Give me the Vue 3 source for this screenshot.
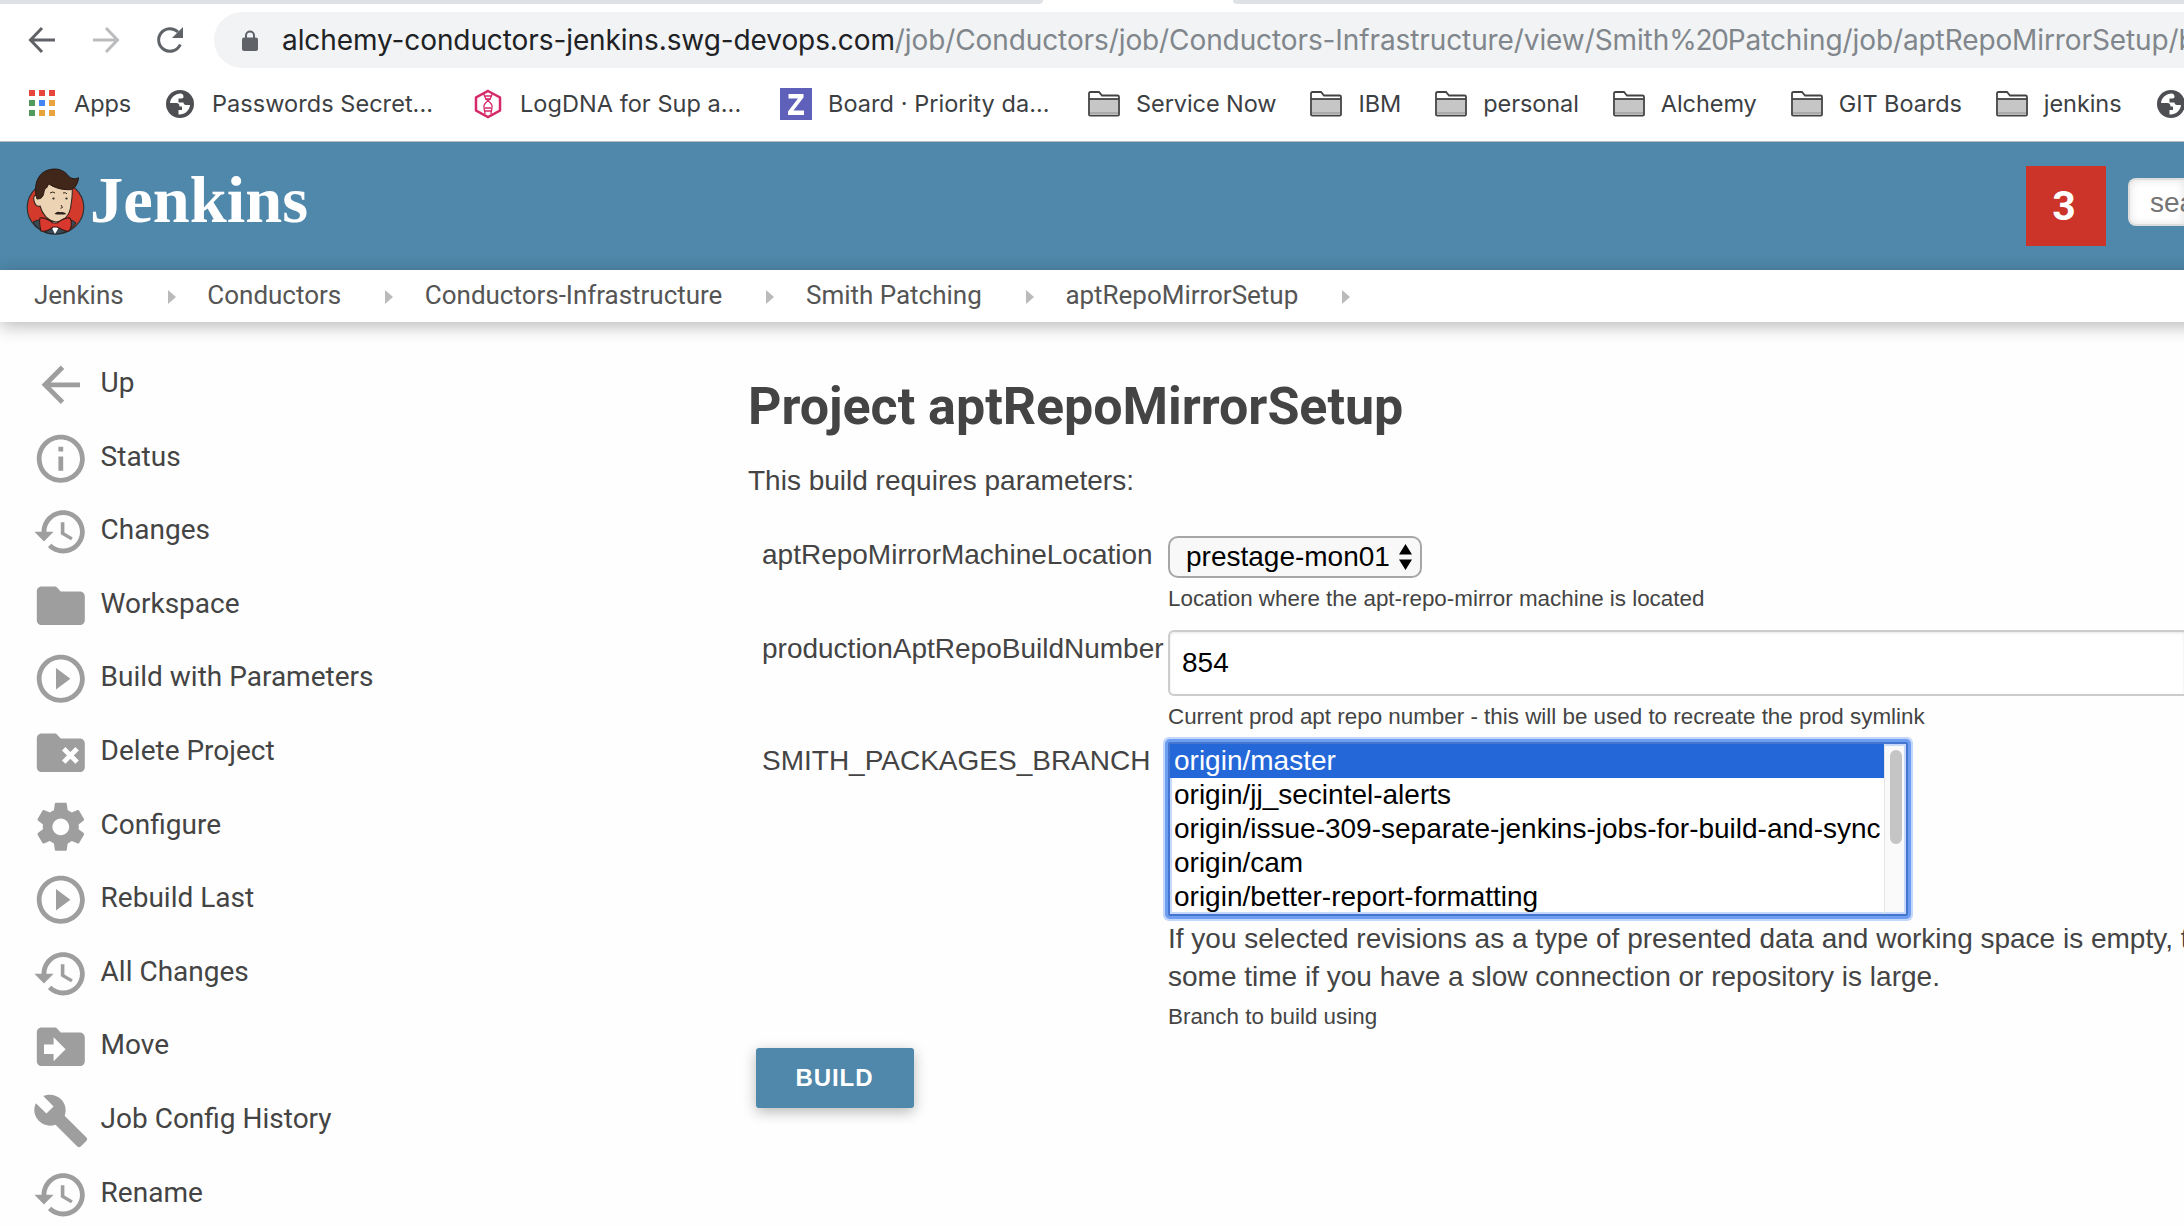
<script setup>
const bookmarks = [
  { icon: 'apps', label: 'Apps' },
  { icon: 'globe', label: 'Passwords Secret...', wide: true },
  { icon: 'dna', label: 'LogDNA for Sup a...', wide: true },
  { icon: 'zen', label: 'Board · Priority da...', wide: true },
  { icon: 'folder', label: 'Service Now' },
  { icon: 'folder', label: 'IBM' },
  { icon: 'folder', label: 'personal' },
  { icon: 'folder', label: 'Alchemy' },
  { icon: 'folder', label: 'GIT Boards' },
  { icon: 'folder', label: 'jenkins' },
  { icon: 'globe', label: '' }
]
const appDots = ['#e8453c', '#e8453c', '#e8453c', '#4f9a5c', '#4285f4', '#e8a33d', '#4f9a5c', '#e8a33d', '#e8a33d']
const crumbs = ['Jenkins', 'Conductors', 'Conductors-Infrastructure', 'Smith Patching', 'aptRepoMirrorSetup']

const paths = {
  back: 'M20 11H7.83l5.59-5.59L12 4l-8 8 8 8 1.41-1.41L7.83 13H20v-2z',
  info: 'M11 17h2v-6h-2v6zm1-15C6.48 2 2 6.48 2 12s4.48 10 10 10 10-4.48 10-10S17.52 2 12 2zm0 18c-4.41 0-8-3.59-8-8s3.59-8 8-8 8 3.59 8 8-3.59 8-8 8zM11 9h2V7h-2v2z',
  history: 'M13 3c-4.97 0-9 4.03-9 9H1l3.89 3.89.07.14L9 12H6c0-3.87 3.13-7 7-7s7 3.13 7 7-3.13 7-7 7c-1.93 0-3.68-.79-4.94-2.06l-1.42 1.42C8.27 19.99 10.51 21 13 21c4.97 0 9-4.03 9-9s-4.03-9-9-9zm-1 5v5l4.28 2.54.72-1.21-3.5-2.08V8H12z',
  folder: 'M10 4H4c-1.1 0-1.99.9-1.99 2L2 18c0 1.1.9 2 2 2h16c1.1 0 2-.9 2-2V8c0-1.1-.9-2-2-2h-8l-2-2z',
  play: 'M10 16.5l6-4.5-6-4.5v9zM12 2C6.48 2 2 6.48 2 12s4.48 10 10 10 10-4.48 10-10S17.52 2 12 2zm0 18c-4.41 0-8-3.59-8-8s3.59-8 8-8 8 3.59 8 8-3.59 8-8 8z',
  gear: 'M19.43 12.98c.04-.32.07-.64.07-.98s-.03-.66-.07-.98l2.11-1.65c.19-.15.24-.42.12-.64l-2-3.46c-.12-.22-.39-.3-.61-.22l-2.49 1c-.52-.4-1.08-.73-1.69-.98l-.38-2.65C14.46 2.18 14.25 2 14 2h-4c-.25 0-.46.18-.49.42l-.38 2.65c-.61.25-1.17.59-1.69.98l-2.49-1c-.23-.09-.49 0-.61.22l-2 3.46c-.13.22-.07.49.12.64l2.11 1.65c-.04.32-.07.65-.07.98s.03.66.07.98l-2.11 1.65c-.19.15-.24.42-.12.64l2 3.46c.12.22.39.3.61.22l2.49-1c.52.4 1.08.73 1.69.98l.38 2.65c.03.24.24.42.49.42h4c.25 0 .46-.18.49-.42l.38-2.65c.61-.25 1.17-.59 1.69-.98l2.49 1c.23.09.49 0 .61-.22l2-3.46c.12-.22.07-.49-.12-.64l-2.11-1.65zM12 15.5c-1.93 0-3.5-1.57-3.5-3.5s1.57-3.5 3.5-3.5 3.5 1.57 3.5 3.5-1.57 3.5-3.5 3.5z',
  wrench: 'M22.7 19l-9.1-9.1c.9-2.3.4-5-1.5-6.9-2-2-5-2.4-7.4-1.3L9 6 6 9 1.6 4.7C.4 7.1.9 10.1 2.9 12.1c1.9 1.9 4.6 2.4 6.9 1.5l9.1 9.1c.4.4 1 .4 1.4 0l2.3-2.3c.5-.4.5-1.1.1-1.4z'
}
const tasks = [
  { icon: 'back', label: 'Up' },
  { icon: 'info', label: 'Status' },
  { icon: 'history', label: 'Changes' },
  { icon: 'folder', label: 'Workspace' },
  { icon: 'play', label: 'Build with Parameters' },
  { icon: 'folder', mark: 'delete', label: 'Delete Project' },
  { icon: 'gear', label: 'Configure' },
  { icon: 'play', label: 'Rebuild Last' },
  { icon: 'history', label: 'All Changes' },
  { icon: 'folder', mark: 'move', label: 'Move' },
  { icon: 'wrench', label: 'Job Config History' },
  { icon: 'history', label: 'Rename' }
]
const branches = [
  'origin/master',
  'origin/jj_secintel-alerts',
  'origin/issue-309-separate-jenkins-jobs-for-build-and-sync',
  'origin/cam',
  'origin/better-report-formatting'
]
</script>

<template>
  <div class="page">
    <div class="tabs"><i class="tab-left"></i><i class="tab-right"></i></div>
    <div class="toolbar">
      <svg class="nav" viewBox="0 0 32 32"><path d="M29 16H5M16 4 4.500 16 16 28" fill="none" stroke="#5f6368" stroke-width="3" /></svg>
      <svg class="nav" viewBox="0 0 32 32"><path d="M3 16h24M16 4l11.500 12L16 28" fill="none" stroke="#babcbe" stroke-width="3" /></svg>
      <svg class="nav" viewBox="0 0 32 32"><path d="M26.300 20.500A11.300 11.300 0 1 1 24 8" fill="none" stroke="#5f6368" stroke-width="3" /><path d="M29 3v11H18z" fill="#5f6368" /></svg>
      <div class="omnibox">
        <svg class="lock" viewBox="0 0 16 21"><path d="M4 9V5.500a4 4 0 0 1 8 0V9" fill="none" stroke="#5f6368" stroke-width="2" /><rect y="7.500" width="16" height="13.500" rx="2" fill="#5f6368" /></svg>
        <span class="host">alchemy-conductors-jenkins.swg-devops.com</span><span class="path">/job/Conductors/job/Conductors-Infrastructure/view/Smith<span class="escape">%20</span>Patching/job/aptRepoMirrorSetup/b</span>
      </div>
    </div>
    <div class="bookmarks">
      <div v-for="(b, i) in bookmarks" :key="i" class="bookmark">
        <svg v-if="b.icon === 'apps'" class="bm-icon" viewBox="0 0 32 32">
          <rect v-for="(c, n) in appDots" :key="n" :x="3 + (n % 3) * 10" :y="2 + Math.floor(n / 3) * 10" width="6" height="6" :fill="c" />
        </svg>
        <svg v-else-if="b.icon === 'globe'" class="bm-icon" viewBox="0 0 32 32">
          <circle cx="16" cy="16" r="14" fill="#4d4f53" />
          <path d="M17 5.500c-6 .3-10.500 4.200-11 9.500h6.500c2 0 3 1.500 3 3.500h2.500v3.500h-3.500v4.500c6 .5 11-4 11.500-9.500h-4c-1.500 0-2.500-1-2.500-2.500h-5v-4h3c1.500 0 2-1 2-2 0-1.500-.8-2.500-2.500-3z" fill="#fff" />
        </svg>
        <svg v-else-if="b.icon === 'dna'" class="bm-icon" viewBox="0 0 32 32">
          <path d="M16 3 28 9.500v13L16 29 4 22.500v-13z" fill="none" stroke="#d5296a" stroke-width="2.500" />
          <path d="M12 6c0 6 8 8 8 12s-1 6-1 8M20 6c0 6-8 8-8 12s1 6 1 8M12.500 8h7M13 11h6M13 20h6M12.500 23h7" fill="none" stroke="#d5296a" stroke-width="1.300" />
        </svg>
        <svg v-else-if="b.icon === 'zen'" class="bm-icon" viewBox="0 0 32 32">
          <rect width="32" height="32" fill="#5e60ba" />
          <path d="M8.500 6h15v3.500L13.500 22.500h10.500V27H8v-3.500L18 10.500H8.500z" fill="#fff" />
        </svg>
        <svg v-else class="bm-icon" viewBox="0 0 32 32">
          <path d="M1 26.500v-21q0-1.500 1.500-1.500h8.500l3 3.500h15.500q1.500 0 1.500 1.500v17.500q0 1.200-1.200 1.200H2.200Q1 27.700 1 26.500z" fill="#fff" stroke="#434343" stroke-width="1.800" />
          <path d="M2 11h28v13H2z" fill="#c6c6c6" /><path d="M2 24h28v2.500H2z" fill="#aaa" /><path d="M1 11h30" stroke="#434343" stroke-width="1.800" />
        </svg>
        <span class="bm-label" :class="{ wide: b.wide }">{{ b.label }}</span>
      </div>
    </div>

    <header class="header">
      <svg class="butler" viewBox="0 0 60 68">
        <ellipse cx="30.500" cy="39.500" rx="28.300" ry="26.500" fill="#d33a2c" stroke="#2f3437" stroke-width="1.200" />
        <path d="M8 54c4-2 9-3 13-2h18c5-1 9 0 12 3-5 7-12 11-21 11S13 62 8 54z" fill="#394a57" stroke="#222" />
        <path d="M24 54l6 12 7-12z" fill="#fff" />
        <path d="M13 28c-4-2-5 1-4 5s3 6 6 5c2 8 8 15 16 16 9-1 14-8 15-17 1-6 2-12 1-20L34 12l-16 2z" fill="#ecd3b4" stroke="#33261d" stroke-width="1.100" />
        <path d="M12 31C8 18 12 3 27 1.200c7-1 13 1.800 17 7.500 4 3 7 2 9.500 1-.5 6-4 12-9 12-9 0-15-2-21-6-1 4-3 5-4 6-1 4-1 8-5 9z" fill="#41261a" stroke="#2a1710" />
        <path d="M25 25q3-2 5 0M38 25q3-1 4 1M36 37l1.500 2.500-2 .8" fill="none" stroke="#33261d" stroke-width="1" />
        <circle cx="28.500" cy="30.500" r="1.100" fill="#222" /><circle cx="41.500" cy="30.500" r="1.100" fill="#222" />
        <path d="M29.500 46c2-2.500 4-2.800 6-1.800 2-.8 4 0 6 1.800-3 .8-9 .8-12 0z" fill="#2a211c" />
        <path d="M15 50c5-1 9 2 13 5h4c4-3 8-6 13-5 2 3 2 10-1 13-4 1-8-2-12-4h-4c-3 3-7 5-12 4-1-4-2-9-1-13z" fill="#d9382e" stroke="#3a1a16" stroke-width="1.100" />
      </svg>
      <span class="brand">Jenkins</span>
      <div class="alert-count">3</div>
      <div class="search">search</div>
    </header>

    <nav class="crumbs">
      <template v-for="c in crumbs" :key="c">
        <span class="crumb">{{ c }}</span>
        <svg class="sep" viewBox="0 0 8 14"><path d="M0 0l8 7-8 7z" fill="#bababa" /></svg>
      </template>
    </nav>

    <div class="body">
      <aside class="side">
        <div v-for="t in tasks" :key="t.label" class="task">
          <svg class="task-icon" viewBox="0 0 24 24">
            <path :d="paths[t.icon]" fill="#9e9e9e" />
            <path v-if="t.mark === 'delete'" d="M13.200 10.300l5.600 5.600M18.800 10.300l-5.600 5.600" stroke="#fff" stroke-width="2" />
            <path v-if="t.mark === 'move'" d="M5 11v4h4v3l5-5-5-5v3z" fill="#fff" />
          </svg>
          <span class="task-label">{{ t.label }}</span>
        </div>
      </aside>

      <main class="main">
        <h1>Project aptRepoMirrorSetup</h1>
        <p class="intro">This build requires parameters:</p>
        <div class="row row-select">
          <label>aptRepoMirrorMachineLocation</label>
          <div class="field">
            <div class="select"><span>prestage-mon01</span><svg viewBox="0 0 13 26"><path d="M6.500 0 13 10.500H0zM6.500 26 0 15.500h13z" /></svg></div>
            <div class="help">Location where the apt-repo-mirror machine is located</div>
          </div>
        </div>
        <div class="row row-input">
          <label>productionAptRepoBuildNumber</label>
          <div class="field">
            <div class="input">854</div>
            <div class="help">Current prod apt repo number - this will be used to recreate the prod symlink</div>
          </div>
        </div>
        <div class="row row-list">
          <label>SMITH_PACKAGES_BRANCH</label>
          <div class="field">
            <div class="list">
              <ul>
                <li v-for="(b, i) in branches" :key="b" :class="{ on: i === 0 }">{{ b }}</li>
              </ul>
              <div class="track"><div class="thumb"></div></div>
            </div>
            <p class="note">If you selected revisions as a type of presented data and working space is empty, t<br />some time if you have a slow connection or repository is large.</p>
            <div class="help">Branch to build using</div>
          </div>
        </div>
        <div class="build">BUILD</div>
      </main>
    </div>
  </div>
</template>

<style>
html, body { margin: 0; overflow: hidden; background: #fff; }
</style>

<style scoped>
.page { width: 2184px; height: 1226px; overflow: hidden; background: #fefefe; color: #444; font-family: "Liberation Sans", Arial, sans-serif; white-space: nowrap; }
.tabs { height: 4px; display: flex; justify-content: space-between; background: #fff; }
.tab-left, .tab-right { background: #dee1e6; }
.tab-left { width: 1043px; border-bottom-right-radius: 8px; }
.tab-right { width: 951px; border-bottom-left-radius: 8px; }
.toolbar { height: 72px; display: flex; align-items: center; padding-left: 26px; box-sizing: border-box; background: #fff; }
.nav { width: 32px; height: 32px; margin-right: 32px; flex: none; }
.nav:nth-of-type(3) { margin-right: 28px; }
.omnibox { flex: 1; min-width: 0; height: 56px; background: #f1f3f4; border-radius: 28px 0 0 28px; display: flex; align-items: center; padding-left: 28px; font: 28px/56px Inter, sans-serif; overflow: hidden; }
.lock { width: 16px; height: 21px; margin-right: 24px; flex: none; }
.host { color: #202124; letter-spacing: -0.09px; }
.path { color: #80868b; letter-spacing: -0.1px; }
.escape { letter-spacing: -1.2px; }
.bookmarks { height: 66px; display: flex; align-items: center; gap: 34px; padding: 0 0 0 26px; box-sizing: border-box; border-bottom: 1px solid #b9bcbd; background: #fff; font: 23.5px/32px Inter, sans-serif; letter-spacing: -0.07px; color: #3c4043; }
.bookmark { display: flex; align-items: center; gap: 16px; flex: none; margin-bottom: 10px; }
.bm-icon { width: 32px; height: 32px; flex: none; }
.bookmark:first-child .bm-label { width: 56px; }
.bookmark .bm-label.wide { width: 226px; letter-spacing: 0.05px; }
.header { height: 128px; background: #4f88ab; display: flex; align-items: flex-start; box-sizing: border-box; padding: 26px 0 0 25px; }
.butler { width: 60px; height: 68px; flex: none; }
.brand { margin: -8px 0 0 5px; font: bold 66.5px/80px "Liberation Serif", "Times New Roman", serif; color: #fff; }
.alert-count { margin: -2px 22px 0 auto; width: 80px; height: 80px; flex: none; box-sizing: border-box; padding-right: 4px; background: #cc3329; color: #fff; font: bold 41px/80px Roboto, sans-serif; text-align: center; }
.search { margin-top: 10px; width: 56px; height: 48px; flex: none; box-sizing: border-box; border: 2px solid #ddd; border-right: 0; border-radius: 8px 0 0 8px; background: #fff; box-shadow: inset 0 0 8px rgba(0,0,0,.12); color: #757575; font-size: 28px; line-height: 45px; padding-left: 20px; overflow: hidden; }
.crumbs { position: relative; width: 2220px; height: 52px; box-sizing: border-box; background: #fff; display: flex; align-items: center; padding-left: 34px; box-shadow: 0 4px 18px rgba(0,0,0,.28); font: 26px/50px Roboto, sans-serif; color: #555; }
.crumb { margin-bottom: 2px; letter-spacing: -0.02px; }
.sep { width: 8px; height: 14px; margin: 2px 31.7px 0 44px; }
.body { display: flex; }
.side { width: 748px; flex: none; padding: 26px 0 0 32px; box-sizing: border-box; }
.task { height: 73.6px; display: flex; align-items: center; font: 28px/36px Roboto, sans-serif; }
.task-icon { width: 57.6px; height: 57.6px; margin-right: 11px; flex: none; }
.task-label { margin-top: -3.6px; }
.main { width: 1436px; flex: none; }
h1 { margin: 53px 0 0; font: bold 52px/64px Roboto, sans-serif; letter-spacing: -0.03px; }
.intro { margin: 26px 0 0; font-size: 28px; line-height: 32px; }
.row { display: grid; grid-template-columns: 406px 1fr; padding-left: 14px; font-size: 28px; line-height: 38px; }
.row-select { margin-top: 39px; }
.select { width: 254px; height: 42px; box-sizing: border-box; border: 2px solid #a6a6a6; border-radius: 10px; background: #f8f8f8; color: #000; display: flex; align-items: center; justify-content: space-between; padding: 0 8px 0 16px; }
.select svg { width: 13px; height: 26px; }
.help { height: 39px; padding-top: 1px; font-size: 22.4px; line-height: 40px; }
.row-input { margin-top: 12px; }
.input { height: 66px; box-sizing: border-box; border: 2px solid #ccc; border-right: 0; border-radius: 6px 0 0 6px; background: #fff; color: #000; line-height: 62px; padding-left: 12px; box-shadow: inset 0 1px 3px rgba(0,0,0,.1); }
.row-list { margin-top: 6px; }
.list { width: 740px; height: 174px; box-sizing: border-box; border: 2px solid #4476cf; box-shadow: 0 0 0 3px #6f9ef1, 0 0 0 5px #c3d7fa; border-radius: 2px; display: flex; color: #000; background: #fff; }
ul { flex: 1; margin: 0; padding: 0; list-style: none; box-shadow: inset 2px -2px 0 #c8d8f8; }
li { height: 34px; line-height: 34px; padding-left: 4px; }
.on { background: #2467d9; color: #fff; }
.track { width: 22px; box-sizing: border-box; border-left: 1px solid #e4e4e4; background: #fafafa; padding: 6px 0 0 5px; box-shadow: inset -2px 2px 0 #c8d8f8, inset 0 -2px 0 #c8d8f8; }
.thumb { width: 12px; height: 94px; border-radius: 6px; background: #c5c5c5; }
.note { margin: 4px 0 0; }
.build { width: 158px; height: 60px; box-sizing: border-box; padding-right: 1px; margin: 12px 0 0 8px; border-radius: 3px; background: #4f88ab; color: #fff; font: bold 24px/60px "Liberation Sans", sans-serif; letter-spacing: 0.9px; text-align: center; box-shadow: 0 4px 14px rgba(0,0,0,.28); }
</style>
